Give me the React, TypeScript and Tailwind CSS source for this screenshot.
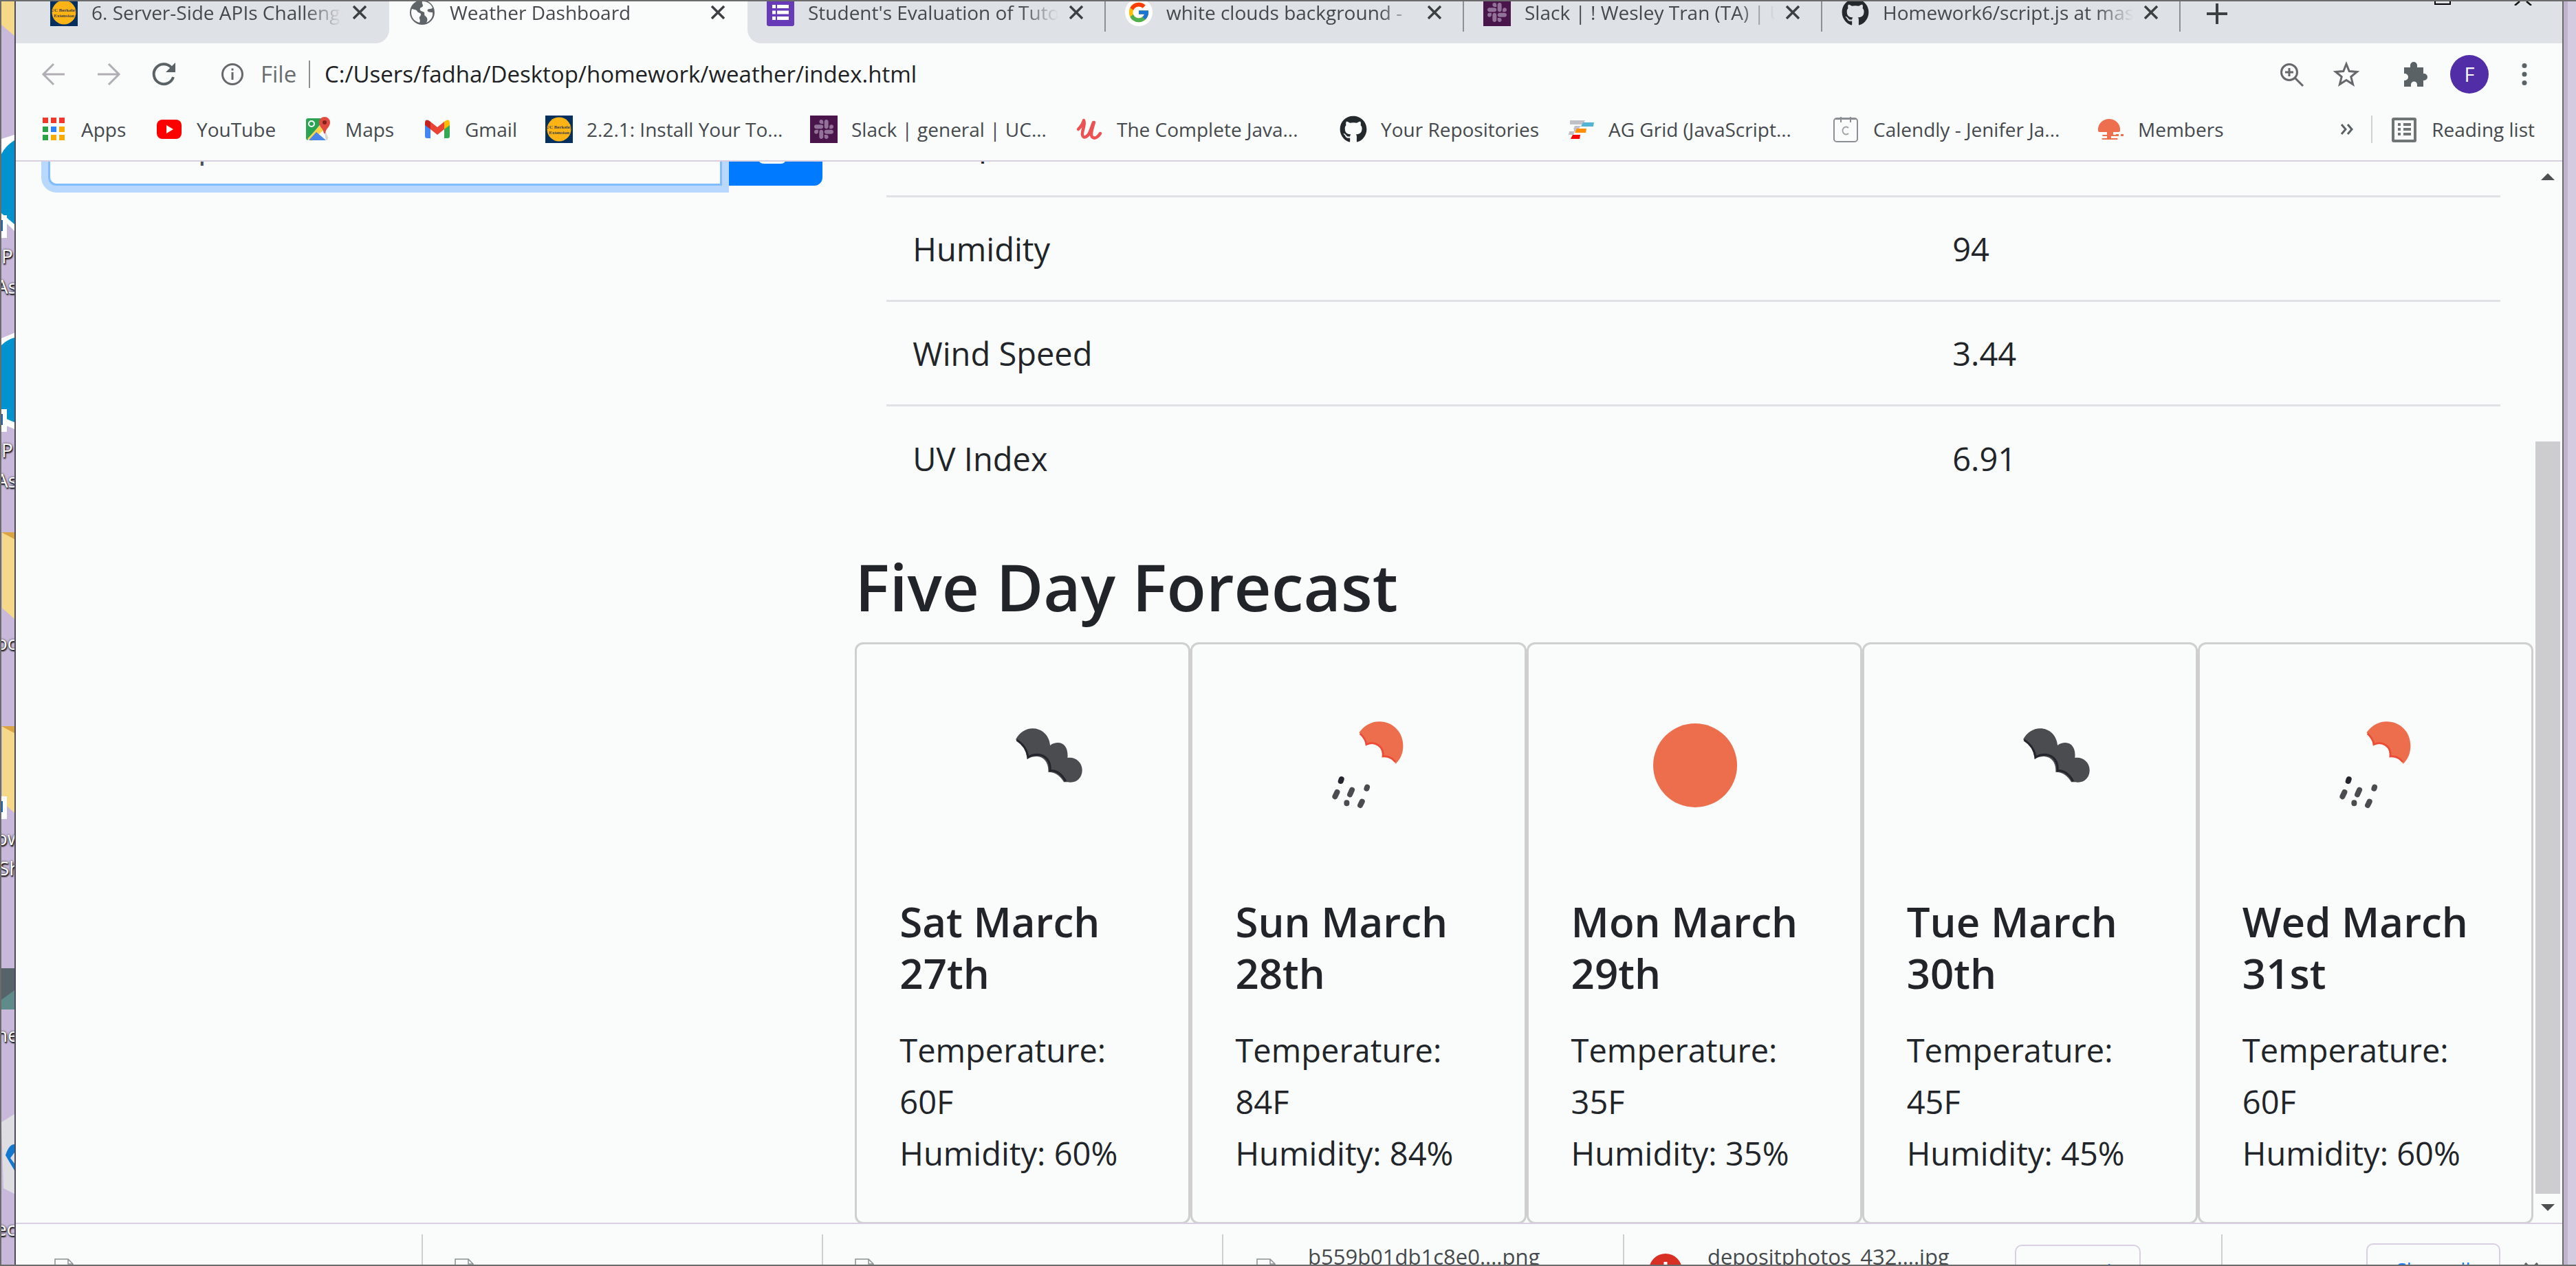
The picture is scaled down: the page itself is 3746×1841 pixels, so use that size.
import React from "react";
import { FaGithub, FaSlack } from "react-icons/fa";
import { FcGoogle } from "react-icons/fc";

/* ---------- small icons ---------- */

const Berkeley = () => (
  <svg viewBox="0 0 40 40" className="size-10" aria-hidden="true">
    <rect width="40" height="40" fill="#03305f" />
    <circle cx="20" cy="20" r="17.500" fill="#fcb315" />
    <g
      fill="#3d4048"
      fontFamily="Liberation Serif, serif"
      fontWeight="700"
      fontSize="7"
      textAnchor="middle"
    >
      <text x="20" y="19">UC Berkeley</text>
      <text x="20" y="27">Extension</text>
    </g>
  </svg>
);

const SlackTile = () => (
  <span className="flex size-10 items-center justify-center bg-[#4a154b]">
    <FaSlack size={32} color="#93729a" />
  </span>
);

const Globe = () => (
  <svg viewBox="0 0 40 40" className="size-10" aria-hidden="true">
    <circle cx="20" cy="20" r="18" fill="#5f6468" />
    <path
      d="M5 15c4 1 7 1 8 4 1 2 5 1 5 4s-3 3-2 6c1 2 1 4 0 6C8 33 4 27 4 20c0-2 .5-4 1-5zM20 4c7 0 12 3 15 9-2 3-5 1-7 3-2 3 3 4 7 4 1 7-3 12-9 15 3-5 1-8-2-10-2-2 1-5-3-6-3-1-5-2-4-5 1-2 4-1 4-4 0-2-2-3-1-6z"
      fill="#fafcfb"
    />
  </svg>
);

const FormsIcon = () => (
  <svg viewBox="0 0 40 40" className="size-10" aria-hidden="true">
    <rect width="40" height="40" rx="3" fill="#673ab7" />
    <path
      d="M8 9h5v5H8zM15 9h17v5H15zM8 17.500h5v5H8zM15 17.500h17v5H15zM8 26h5v5H8zM15 26h17v5H15z"
      fill="#fff"
    />
  </svg>
);

const GoogleIcon = () => (
  <span className="flex size-10 items-center justify-center rounded-full bg-white">
    <FcGoogle size={34} />
  </span>
);

const AppsIcon = () => (
  <svg viewBox="0 0 40 40" className="size-10" aria-hidden="true">
    <path d="M4 3h8v8H4zM16 3h8v8h-8zM28 3h8v8h-8z" fill="#f0392b" />
    <path d="M4 16h8v8H4zM4 28h8v8H4z" fill="#2ba14b" />
    <path d="M16 16h8v8h-8z" fill="#2a84f5" />
    <path d="M28 16h8v8h-8zM16 28h8v8h-8zM28 28h8v8h-8z" fill="#f9ab00" />
  </svg>
);

const YouTubeIcon = () => (
  <svg viewBox="0 0 40 40" className="size-10" aria-hidden="true">
    <rect x="2" y="6" width="36" height="28" rx="8" fill="#f00" />
    <path d="M16 14l10 6-10 6z" fill="#fff" />
  </svg>
);

const MapsIcon = () => (
  <svg viewBox="0 0 40 40" className="size-10" aria-hidden="true">
    <path d="M3 7q0-3 3-3h25L5 36q-2-1-2-3z" fill="#2aa352" />
    <path d="M27 12l8 20q0 4-3 4z" fill="#d5d5d8" />
    <path d="M5 34L28 9l4 9L11 37z" fill="#fbd34d" />
    <path d="M18 24l14 12H7z" fill="#4a86ea" />
    <circle cx="11" cy="12" r="4" fill="none" stroke="#fff" strokeWidth="2" />
    <path d="M22 10a8 8 0 0116 0c0 7-6 8-7 16h-2c-1-8-7-9-7-16z" fill="#e04a3f" />
    <circle cx="30" cy="10" r="3" fill="#7c231d" />
  </svg>
);

const GmailIcon = () => (
  <svg viewBox="0 0 40 40" className="size-10" aria-hidden="true">
    <path d="M2 12l8 6v15H5q-3 0-3-3z" fill="#4285f4" />
    <path d="M38 12l-8 6v15h5q3 0 3-3z" fill="#34a853" />
    <path d="M30 9l2-1.500q6-3 6 3.500v3l-8 6z" fill="#fbbc04" />
    <path d="M10 9L8 7.500Q2 4.500 2 11v3l8 6z" fill="#c5221f" />
    <path d="M10 9l10 8 10-8v11l-10 8-10-8z" fill="#ea4335" />
  </svg>
);

const UdemyIcon = () => (
  <svg viewBox="0 0 40 40" className="size-10" aria-hidden="true">
    <path
      d="M4 20c4-4 7-8 8-13 3 6-3 15-2 21 1 7 9 3 12-7l4-11"
      fill="none"
      stroke="#ec5252"
      strokeWidth="4.500"
      strokeLinecap="round"
      strokeLinejoin="round"
    />
    <path
      d="M27 10c-2 7-6 16-3 21 4 4 9 0 12-5"
      fill="none"
      stroke="#ec5252"
      strokeWidth="4.500"
      strokeLinecap="round"
    />
  </svg>
);

const GithubIcon = () => <FaGithub size={40} color="#24292e" />;

const AgGridIcon = () => (
  <svg viewBox="0 0 40 40" className="size-10" aria-hidden="true">
    <path d="M4 7h22l-3 6H4zM11 15h9l-4 5h-7zM3 23h8l-2 5H2zM16 20h-6v3h4z" fill="#c0c0c8" />
    <path d="M23 10h16l-1 6H20z" fill="#55b4d4" />
    <path d="M14 19h14l-1 6H11z" fill="#ff8e00" />
    <path d="M8 28h11l-1 6H5z" fill="#f00" />
  </svg>
);

const CalendlyIcon = () => (
  <svg viewBox="0 0 40 40" className="size-10" aria-hidden="true">
    <rect x="3" y="4" width="34" height="34" rx="4" fill="none" stroke="#8a8f93" strokeWidth="2" />
    <path d="M13 2v8M27 2v8M4 5h32" stroke="#8a8f93" strokeWidth="2" />
    <path d="M24 18a5 5.500 0 100 8" fill="none" stroke="#9fa3a6" strokeWidth="2" />
  </svg>
);

const MembersIcon = () => (
  <svg viewBox="0 0 40 40" className="size-10" aria-hidden="true">
    <path
      d="M2 22C1 12 9 5 18 5s17 7 16 17q0 2-3 2h-7v4h6v2h-9v3h9q2 2-1 2H9q-3-1-1-2h7v-3H9q-2-2 0-2h6v-4H5q-3 0-3-2z"
      fill="#ee6f4d"
    />
    <path d="M28 27h4v3h-4zM35 27h4v3h-4z" fill="#ee6f4d" />
  </svg>
);

const ReadingIcon = () => (
  <svg viewBox="0 0 40 40" className="size-10" aria-hidden="true">
    <rect x="4" y="5" width="32" height="32" rx="1" fill="none" stroke="#6f7475" strokeWidth="4" />
    <path d="M11 13h4M11 20h4M11 27h4M19 13h11M19 20h11M19 27h11" stroke="#6f7475" strokeWidth="4" />
  </svg>
);

const Stroke = ({
  d,
  color = "#5a6266",
  children,
}: {
  d: string;
  color?: string;
  children?: React.ReactNode;
}) => (
  <svg
    viewBox="0 0 40 40"
    className="size-10 shrink-0"
    fill="none"
    stroke={color}
    strokeWidth="3"
    aria-hidden="true"
  >
    <path d={d} />
    {children}
  </svg>
);

/* ---------- browser chrome ---------- */

type TabInfo = { icon: React.ReactNode; title: string };

const Tab = ({ icon, title, divider }: TabInfo & { divider?: boolean }) => (
  <div className="flex h-full w-[521px] shrink-0 items-start">
    <div className="flex h-9 w-full items-center pl-7">
      <span className="-mt-1 shrink-0">{icon}</span>
      <span className="-mt-1 ml-5 w-[368px] overflow-hidden text-[28px] leading-10 whitespace-nowrap text-[#45494d] [mask-image:linear-gradient(to_right,#000_84%,transparent_99%)]">
        {title}
      </span>
      <button aria-label={`Close ${title}`} className="ml-3 -mt-1">
        <svg viewBox="0 0 20 20" className="size-5" stroke="#3c4043" strokeWidth="3.500">
          <path d="M1 1l18 18M19 1L1 19" />
        </svg>
      </button>
    </div>
    {divider && <span className="h-11 w-[2px] shrink-0 bg-[#8d9093]" />}
  </div>
);

const TabStrip = () => (
  <div className="flex h-[61px] shrink-0 overflow-hidden bg-[#fafcfb]">
    <div className="rounded-br-[20px] bg-[#dee1e6] pl-[22px]">
      <Tab icon={<Berkeley />} title="6. Server-Side APIs Challenge" />
    </div>
    <Tab icon={<Globe />} title="Weather Dashboard" />
    <div className="flex flex-1 rounded-bl-[20px] bg-[#dee1e6]">
      <Tab icon={<FormsIcon />} title="Student's Evaluation of Tutor" divider />
      <Tab icon={<GoogleIcon />} title="white clouds background -" divider />
      <Tab icon={<SlackTile />} title="Slack | ! Wesley Tran (TA) | UC" divider />
      <Tab icon={<GithubIcon />} title="Homework6/script.js at mast" divider />
      <button aria-label="New tab" className="ml-[38px] h-9">
        <svg viewBox="0 0 30 30" className="size-[30px]" stroke="#3c4043" strokeWidth="4">
          <path d="M15 0v30M0 15h30" />
        </svg>
      </button>
      <div className="ml-auto flex items-start gap-[92px] pr-[44px]">
        <button aria-label="Maximize" className="h-[5px] w-6 border-x-2 border-b-2 border-black" />
        <button aria-label="Close window">
          <svg viewBox="0 0 26 6" className="h-[6px] w-[26px]" stroke="#111" strokeWidth="2.500">
            <path d="M8 0L1 6M18 0l7 6" />
          </svg>
        </button>
      </div>
    </div>
  </div>
);

const Toolbar = () => (
  <div className="flex h-[90px] shrink-0 items-center pr-[35px] pl-[35px]">
    <button aria-label="Back">
      <Stroke color="#b0aeb4" d="M36 20H6M20 5L5 20l15 15" />
    </button>
    <button aria-label="Forward" className="ml-10">
      <Stroke color="#b0aeb4" d="M4 20h30M20 5l15 15-15 15" />
    </button>
    <button aria-label="Reload" className="ml-10">
      <svg viewBox="0 0 40 40" className="size-10" aria-hidden="true">
        <path d="M34 24a14.500 14.500 0 11-3-14" fill="none" stroke="#5a6266" strokeWidth="4" />
        <path d="M37 3v14H23z" fill="#5a6266" />
      </svg>
    </button>
    <span className="ml-[60px]">
      <Stroke color="#65696c" d="M20 17v11M20 11.500v3">
        <circle cx="20" cy="20" r="14.500" />
      </Stroke>
    </span>
    <span className="ml-[21px] w-[70px] text-[33px] leading-10 text-[#6a6e71]">File</span>
    <span className="h-10 w-[2px] bg-[#8d9093]" />
    <label htmlFor="url" className="sr-only">
      Address
    </label>
    <input
      id="url"
      readOnly
      value="C:/Users/fadha/Desktop/homework/weather/index.html"
      className="ml-[21px] min-w-0 flex-1 bg-transparent text-[33px] leading-10 text-[#202124] outline-none"
    />
    <button aria-label="Zoom">
      <Stroke color="#65696c" d="M24.500 24.500L37 37M17 11v12M11 17h12">
        <circle cx="17" cy="17" r="11.500" />
      </Stroke>
    </button>
    <button aria-label="Bookmark this page" className="ml-10">
      <Stroke
        color="#65696c"
        d="M20 5l4.200 10.500 11.300.9-8.700 7.200 2.800 11L20 28.500l-9.600 6.100 2.800-11-8.700-7.200 11.300-.9z"
      />
    </button>
    <button aria-label="Extensions" className="ml-[60px]">
      <svg viewBox="0 0 40 40" className="size-10" aria-hidden="true">
        <path
          d="M4 10h9V7a5 5 0 0110 0v3h9v9h1a5 5 0 010 10h-1v9h-9v-3a4.500 4.500 0 00-9 0v3H4v-9h1a5 5 0 000-10H4z"
          fill="#5a6266"
        />
      </svg>
    </button>
    <button
      aria-label="Profile"
      className="ml-[31px] flex size-14 items-center justify-center rounded-full bg-[#512da8] text-[29px] leading-10 text-white"
    >
      F
    </button>
    <button aria-label="Menu" className="ml-8">
      <svg viewBox="0 0 40 40" className="size-10" fill="#5a6266" aria-hidden="true">
        <circle cx="20" cy="7.500" r="3.500" />
        <circle cx="20" cy="20" r="3.500" />
        <circle cx="20" cy="32.500" r="3.500" />
      </svg>
    </button>
  </div>
);

const bookmarks = [
  { icon: <AppsIcon />, label: "Apps", w: "w-[168px]" },
  { icon: <YouTubeIcon />, label: "YouTube", w: "w-[216px]" },
  { icon: <MapsIcon />, label: "Maps", w: "w-[174px]" },
  { icon: <GmailIcon />, label: "Gmail", w: "w-[177px]" },
  { icon: <Berkeley />, label: "2.2.1: Install Your To...", w: "w-[385px]" },
  { icon: <SlackTile />, label: "Slack | general | UC...", w: "w-[386px]" },
  { icon: <UdemyIcon />, label: "The Complete Java...", w: "w-[384px]" },
  { icon: <GithubIcon />, label: "Your Repositories", w: "w-[331px]" },
  { icon: <AgGridIcon />, label: "AG Grid (JavaScript...", w: "w-[385px]" },
  { icon: <CalendlyIcon />, label: "Calendly - Jenifer Ja...", w: "w-[385px]" },
  { icon: <MembersIcon />, label: "Members", w: "w-[200px]" },
];

const BookmarksBar = () => (
  <nav
    aria-label="Bookmarks"
    className="flex h-[82px] shrink-0 items-start border-b-2 border-[#d8d0e2] bg-[#fafcfb] pr-[40px] pl-[35px] text-[28px] leading-10 whitespace-nowrap text-[#45494d]"
  >
    {bookmarks.map((b) => (
      <a key={b.label} href="#" className={`flex shrink-0 items-center gap-5 pt-[15px] ${b.w}`}>
        {b.icon}
        {b.label}
      </a>
    ))}
    <button aria-label="More bookmarks" className="mt-[15px] ml-auto">
      <svg
        viewBox="0 0 20 40"
        className="h-10 w-5"
        fill="none"
        stroke="#5a6266"
        strokeWidth="3"
        aria-hidden="true"
      >
        <path d="M2 13l6 7-6 7M11 13l6 7-6 7" />
      </svg>
    </button>
    <span className="mt-[15px] ml-[25px] h-10 w-[2px] bg-[#cfd1d3]" />
    <button className="mt-[15px] ml-[26px] flex items-center gap-5">
      <ReadingIcon />
      Reading list
    </button>
  </nav>
);

/* ---------- weather pictures ---------- */

const Clouds = () => (
  <g transform="translate(151 43) scale(.3333)">
    <path
      d="M54 106C70 76 98 58 128 58c42 0 73 32 76 74 10-9 22-12 34-12 28 0 46 25 42 66 30-6 64 16 64 54 0 36-28 58-62 52h-18c-14-26-38-44-68-44 2-38-16-66-50-68-14 0-28 2-42 12-2-36-20-66-50-86z"
      fill="#4b4c4f"
    />
    <path
      d="M58 108c28 18 46 42 50 76 14-10 28-12 42-12 36 2 58 30 54 70 32-2 52 18 68 46"
      fill="none"
      stroke="#24262d"
      strokeWidth="9"
    />
  </g>
);

const Rain = () => (
  <g transform="translate(123 43) scale(.3333)">
    <path
      d="M172 76C194 46 224 28 260 28c60 0 104 46 104 106 0 32-12 58-32 78-14-22-32-34-60-28 6-38-22-66-60-58l-12 6c0-20-8-38-28-56z"
      fill="#ec6e4c"
    />
    <path
      d="M176 80c18 16 26 32 28 48 36-18 78 8 72 52 26-2 42 8 54 24"
      fill="none"
      stroke="#ee4b36"
      strokeWidth="8"
    />
    <g stroke="#4b4c4f" strokeWidth="24" strokeLinecap="round">
      <path d="M95 279l-3 9" stroke="#24262d" />
      <path d="M76 336l-9 19M141 326l-9 20M207 314l-2 6M118 382v3M185 377l-8 16" />
    </g>
  </g>
);

const Sun = () => <circle cx="180" cy="116" r="61" fill="#ec6e4c" />;

const forecast = [
  { day: "Sat March 27th", value: 60, picture: <Clouds /> },
  { day: "Sun March 28th", value: 84, picture: <Rain /> },
  { day: "Mon March 29th", value: 35, picture: <Sun /> },
  { day: "Tue March 30th", value: 45, picture: <Clouds /> },
  { day: "Wed March 31st", value: 60, picture: <Rain /> },
];

/* ---------- page ---------- */

const SearchForm = () => (
  <form className="-mt-[83px] flex items-start">
    <label htmlFor="city" className="sr-only">
      City
    </label>
    <input
      id="city"
      defaultValue="Philadelphia"
      className="relative ml-[10px] h-[118px] min-w-0 flex-1 rounded-l-xl border-[3px] border-[#80bdff] bg-[#fafcfb] px-[37px] text-[48px] leading-[75px] text-[#495057] shadow-[0_0_0_10px_#b8d9fd] outline-none"
    />
    <button
      type="button"
      aria-label="Search"
      className="flex h-[118px] w-[146px] items-center justify-center rounded-r-xl bg-[#007bff]"
    >
      <svg viewBox="0 0 50 54" className="h-[54px] w-[50px]" fill="#fff" aria-hidden="true">
        <path d="M25 0l20 20v26q0 8-8 8H13q-8 0-8-8V20z" />
      </svg>
    </button>
  </form>
);

const rows = [
  ["Temperature", ""],
  ["Humidity", "94"],
  ["Wind Speed", "3.44"],
  ["UV Index", "6.91"],
];

const ForecastPage = () => (
  <main className="flex min-w-0 flex-1 text-[47px] leading-[75px] text-[#212529]">
    <section className="w-1/3 shrink-0 pr-[47px] pl-[37px]">
      <SearchForm />
    </section>
    <section className="min-w-0 flex-1">
      <div className="pr-[48px] pl-[46px]">
        <table className="-mt-[102px] w-full table-fixed border-collapse text-left">
          <tbody>
            {rows.map(([name, value]) => (
              <tr key={name} className="h-[152px] border-b-[3px] border-[#dee2e6] last:border-b-0">
                <td className="w-[64%] px-[38px] pt-[3px]">{name}</td>
                <td className="px-[48px] pt-[3px]">{value}</td>
              </tr>
            ))}
          </tbody>
        </table>
      </div>
      <h2 className="mt-[52px] mb-[21px] text-[94px] leading-[120px] font-semibold">
        Five Day Forecast
      </h2>
      <div className="grid grid-cols-5">
        {forecast.map((f) => (
          <article
            key={f.day}
            className="rounded-xl border-[3px] border-[#cfcfd0] bg-[#fafcfb] px-[62px] pt-[60px] pb-[62px]"
          >
            <svg viewBox="0 0 358 232" className="h-[232px] w-full" aria-hidden="true">
              {f.picture}
            </svg>
            <h5 className="mt-[74px] mb-[37px] text-[60px] leading-[75px] font-semibold">
              {f.day}
            </h5>
            <p>Temperature: {f.value}F</p>
            <p>Humidity: {f.value}%</p>
          </article>
        ))}
      </div>
    </section>
  </main>
);

const Scrollbar = () => (
  <div className="flex w-[42px] shrink-0 flex-col items-center pt-[17px] pb-[17px]">
    <svg viewBox="0 0 20 10" className="h-[10px] w-5" fill="#4d4f50" aria-hidden="true">
      <path d="M10 0l10 10H0z" />
    </svg>
    <div className="flex w-full flex-1 flex-col items-center pb-[15px]">
      <div className="flex-[380]" />
      <div className="w-9 flex-[1094] bg-[#cdcdd0]" />
    </div>
    <svg viewBox="0 0 20 10" className="h-[10px] w-5" fill="#4d4f50" aria-hidden="true">
      <path d="M0 0h20L10 10z" />
    </svg>
  </div>
);

const FileIcon = () => (
  <svg
    viewBox="0 0 28 36"
    className="mt-[50px] h-9 w-7 shrink-0"
    fill="none"
    stroke="#8b9092"
    strokeWidth="1.500"
    aria-hidden="true"
  >
    <path d="M1 35V1h19l7 7v27zM20 1v7h7" />
  </svg>
);

const Divider = () => <span className="mt-[15px] h-12 w-[2px] shrink-0 bg-[#cfcfd0]" />;

const DownloadBar = () => (
  <footer className="flex h-[61px] shrink-0 items-start overflow-hidden border-t-2 border-[#d8d0e2] bg-[#fafcfb] pl-[10px] text-[31px] whitespace-nowrap text-[#45494d]">
    {["index.html", "dashboard.html", "weather.html"].map((name) => (
      <div key={name} className="flex w-[582px] shrink-0">
        <div className="flex flex-1 gap-[52px] pl-[46px]">
          <FileIcon />
          <span className="mt-[50px] leading-10">{name}</span>
        </div>
        <Divider />
      </div>
    ))}
    <div className="flex w-[583px] shrink-0">
      <div className="flex flex-1 gap-[47px] pl-[48px]">
        <FileIcon />
        <span className="mt-[27px] leading-10">b559b01db1c8e0....png</span>
      </div>
      <Divider />
    </div>
    <div className="flex w-[870px] shrink-0">
      <div className="flex flex-1 pl-9">
        <svg viewBox="0 0 48 48" className="mt-[43px] size-12 shrink-0" aria-hidden="true">
          <circle cx="24" cy="24" r="24" fill="#d93025" />
          <path d="M24 12v16M24 32v4" stroke="#fff" strokeWidth="5" />
        </svg>
        <span className="mt-[27px] ml-[37px] w-[447px] leading-10">depositphotos_432....jpg</span>
        <button className="mt-[30px] h-[76px] w-[183px] rounded-[10px] border-2 border-[#d8d0e2] text-[28px] text-[#0b7bff]">
          Discard
        </button>
      </div>
      <Divider />
    </div>
    <button className="mt-[28px] ml-auto h-[76px] w-[195px] rounded-[10px] border-2 border-[#d8d0e2] text-[28px] text-[#0b7bff]">
      Show all
    </button>
    <button aria-label="Close downloads bar" className="mt-[56px] mr-[35px] ml-[35px]">
      <svg viewBox="0 0 20 20" className="size-5" stroke="#5a6266" strokeWidth="3.500">
        <path d="M1 1l18 18M19 1L1 19" />
      </svg>
    </button>
  </footer>
);

/* ---------- desktop behind the window ---------- */

const Caption = ({ at, children }: { at: string; children: string }) => (
  <span
    className={`absolute text-[28px] leading-8 text-white [text-shadow:1px_2px_2px_#000,0_0_3px_#222] ${at}`}
  >
    {children}
  </span>
);

const Desktop = () => (
  <aside className="relative w-[21px] shrink-0 overflow-hidden border-r-2 border-[#4c4a5c] bg-[#c8b9da]">
    <svg viewBox="0 0 19 1837" className="absolute top-0 left-0 h-[1837px] w-[19px]" aria-hidden="true">
      <path d="M0 0h19v50L0 34z" fill="#f6d889" />
      <path d="M0 200l19-6v140L0 315z" fill="#fff" />
      <path d="M0 222q6-12 19-20v122L0 308z" fill="#0093d0" />
      <path d="M0 490l19-8v140l-19-8z" fill="#fff" />
      <path d="M0 500q8-8 19-11v123l-19-8z" fill="#0093d0" />
      <path d="M1 772h18v126L1 882z" fill="#f6d889" />
      <path d="M1 1054h18v126L1 1164z" fill="#f6d889" />
      <path d="M0 772h19v10zM0 1054h19v10z" fill="#d9a441" />
      <path d="M0 311h8v33H0zM0 593h8v33H0zM0 1156h8v33H0z" fill="#fff" />
      <path d="M0 318h2v16H0zM0 600h2v16H0zM0 1163h2v16H0z" fill="#1b5fb4" />
      <path d="M0 1406h19v60H0z" fill="#56646a" />
      <path d="M0 1452l19-14v28H0z" fill="#5f8b8b" />
      <path d="M0 1630l19-12v116l-16-8z" fill="#dedde2" />
      <path d="M6 1678c4-12 8-16 13-16v12l-6 8 6 8v10z" fill="#1277cf" />
    </svg>
    <Caption at="left-0 top-[354px]">P</Caption>
    <Caption at="-left-2 top-[398px]">As</Caption>
    <Caption at="left-0 top-[636px]">P</Caption>
    <Caption at="-left-2 top-[680px]">As</Caption>
    <Caption at="-left-2 top-[916px]">oc</Caption>
    <Caption at="-left-2 top-[1200px]">ow</Caption>
    <Caption at="-left-1 top-[1244px]">Sh</Caption>
    <Caption at="-left-2 top-[1486px]">he</Caption>
    <Caption at="-left-2 top-[1768px]">ec</Caption>
  </aside>
);

const PuzzleFreeWindow = () => (
  <div className="flex min-w-0 flex-1 flex-col border-r-2 border-[#6b6b6b] bg-[#fafcfb]">
    <TabStrip />
    <Toolbar />
    <BookmarksBar />
    <div className="flex min-h-0 flex-1 overflow-hidden">
      <ForecastPage />
      <Scrollbar />
    </div>
    <DownloadBar />
  </div>
);

export default function App() {
  return (
    <div className="flex h-screen overflow-hidden border-y-2 border-l-2 border-[#6b6b6b] bg-[#d3cbe0] font-['Open_Sans','Noto_Sans',sans-serif]">
      <Desktop />
      <PuzzleFreeWindow />
      <div className="w-[18px] shrink-0 border-l-[6px] border-[#bfb3cd]" />
    </div>
  );
}
